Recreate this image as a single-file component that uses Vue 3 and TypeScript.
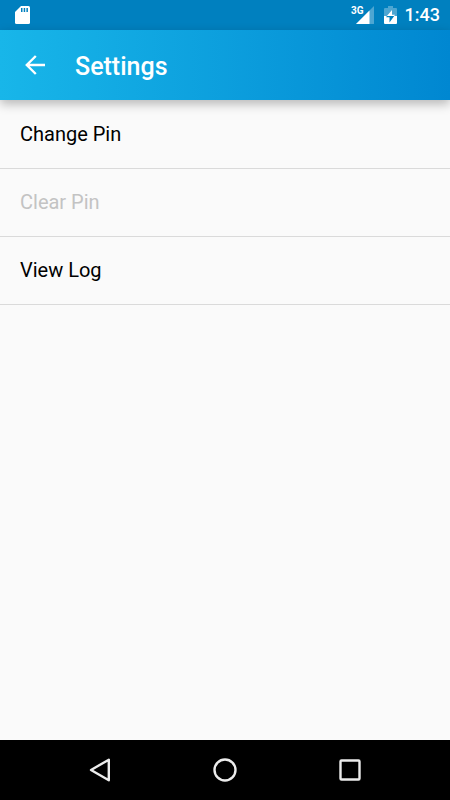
<script setup lang="ts">
interface SettingItem {
  label: string
  disabled: boolean
}

const clock = '1:43'
const items: SettingItem[] = [
  { label: 'Change Pin', disabled: false },
  { label: 'Clear Pin', disabled: true },
  { label: 'View Log', disabled: false },
]
</script>

<template>
  <div class="screen">
    <div class="status-bar">
      <svg class="sd-card" width="16" height="20" viewBox="0 0 16 20" aria-hidden="true">
        <path d="M6 1H13.5Q15 1 15 2.500V17.500Q15 19 13.500 19H1.500Q0 19 0 17.500V7Z" fill="#fff" />
        <path d="M6 3H7.500V7H6ZM8.700 3H10.200V7H8.700ZM11.400 3H12.900V7H11.400Z" fill="#0080bf" />
      </svg>
      <div class="status-right">
        <div class="signal">
          <span class="network">3G</span>
          <svg width="18" height="18" viewBox="0 0 18 18" aria-hidden="true">
            <path d="M18 0V18H0Z" fill="#fff" fill-opacity=".3" />
            <path d="M13.500 4.500V18H0Z" fill="#fff" />
          </svg>
        </div>
        <svg class="battery" width="13" height="18" viewBox="0 0 13 18" aria-hidden="true">
          <path d="M4 0H9V2H12Q13 2 13 3V10H0V3Q0 2 1 2H4Z" fill="#fff" fill-opacity=".3" />
          <path d="M0 10H13V17Q13 18 12 18H1Q0 18 0 17Z" fill="#fff" />
          <path d="M2.800 10H10.200L5.500 16.500V11.200H2.200Z" fill="#0080bf" />
          <path d="M8 4V8.700H11L10.100 10H2.900Z" fill="#fff" />
        </svg>
        <span class="clock">{{ clock }}</span>
      </div>
    </div>

    <header class="app-bar">
      <button class="back" type="button" aria-label="Back">
        <svg width="20" height="20" viewBox="0 0 20 20" aria-hidden="true">
          <path d="M20 10H2M10.800 1L1.800 10L10.800 19" fill="none" stroke="#fff" stroke-width="2.400" />
        </svg>
      </button>
      <h1 class="title">Settings</h1>
    </header>

    <main class="content">
      <ul class="list">
        <li v-for="item in items" :key="item.label" class="row">
          <button class="item" type="button" :disabled="item.disabled">{{ item.label }}</button>
        </li>
      </ul>
    </main>

    <nav class="nav-bar">
      <button class="nav-button" type="button" aria-label="System back">
        <svg width="24" height="24" viewBox="0 0 24 24" aria-hidden="true">
          <path d="M20.800 1.700V22.300L3 12Z" fill="none" stroke="#ececec" stroke-width="2.400" stroke-linejoin="round" />
        </svg>
      </button>
      <button class="nav-button" type="button" aria-label="Home">
        <svg width="24" height="24" viewBox="0 0 24 24" aria-hidden="true">
          <circle cx="12" cy="12" r="10.500" fill="none" stroke="#ececec" stroke-width="2.400" />
        </svg>
      </button>
      <button class="nav-button" type="button" aria-label="Recent apps">
        <svg width="24" height="24" viewBox="0 0 24 24" aria-hidden="true">
          <rect x="2.500" y="2.500" width="19" height="19" rx="1" fill="none" stroke="#ececec" stroke-width="2.400" />
        </svg>
      </button>
    </nav>
  </div>
</template>

<style>
body {
  margin: 0;
  background: #fafafa;
}
</style>

<style scoped>
.screen {
  display: flex;
  flex-direction: column;
  min-height: 100vh;
  background: #fafafa;
  color: #000;
  font-family: Roboto, "Liberation Sans", sans-serif;
}

button {
  margin: 0;
  padding: 0;
  border: 0;
  background: none;
  color: inherit;
  font: inherit;
}

svg {
  display: block;
}

.status-bar {
  display: flex;
  align-items: center;
  justify-content: space-between;
  height: 30px;
  padding: 0 10px 0 15px;
  background: #0080bf;
  color: #fff;
}

.status-right,
.signal {
  display: flex;
  align-items: center;
}

.signal svg {
  margin-left: -8px;
}

.network {
  align-self: flex-start;
  font-size: 10px;
  line-height: 10px;
  font-weight: 700;
}

.battery {
  margin: 0 8px 0 10px;
}

.clock {
  font-size: 18px;
  line-height: 30px;
  font-weight: 500;
}

.app-bar {
  display: flex;
  align-items: center;
  height: 70px;
  padding-left: 10px;
  background: linear-gradient(90deg, #18b6e9, #0087d1);
  box-shadow: 0 4px 10px rgba(0, 0, 0, 0.27);
  color: #fff;
}

.back {
  display: flex;
  align-items: center;
  justify-content: center;
  width: 50px;
  height: 50px;
}

.title {
  margin: 3px 0 0 15px;
  font-size: 25px;
  line-height: 30px;
  font-weight: 500;
}

.content {
  flex: 1;
}

.list {
  margin: 0;
  padding: 1px 0 0;
  list-style: none;
}

.row {
  border-bottom: 1px solid #dadada;
}

.item {
  display: block;
  width: 100%;
  padding: 20px;
  font-size: 20px;
  line-height: 27px;
  text-align: left;
}

.item:disabled {
  color: #c3c3c3;
}

.nav-bar {
  display: flex;
  justify-content: center;
  height: 60px;
  background: #000;
}

.nav-button {
  display: flex;
  flex: 0 1 125px;
  align-items: center;
  justify-content: center;
}
</style>
